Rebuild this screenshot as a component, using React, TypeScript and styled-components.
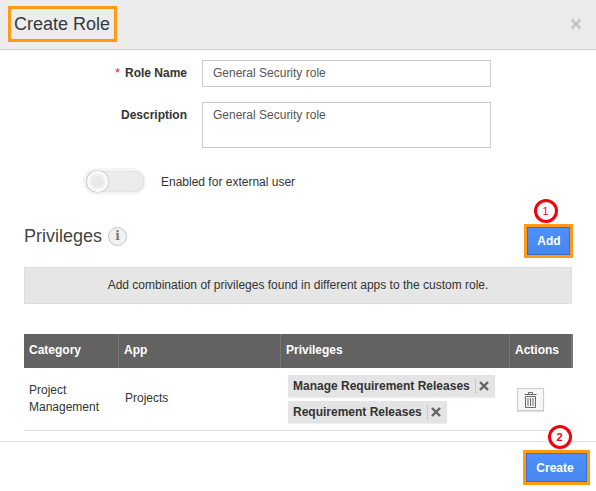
import React from 'react'
import styled, { createGlobalStyle } from 'styled-components'

const GlobalStyle = createGlobalStyle`
  html, body {
    margin: 0;
    padding: 0;
    background: #fff;
    font-family: "Liberation Sans", Arial, sans-serif;
    color: #333;
  }
`

const Modal = styled.div`
  width: 596px;
  height: 491px;
  overflow: hidden;
  background: #fff;
`

const Header = styled.header`
  height: 49px;
  box-sizing: content-box;
  background: #ececec;
  border-bottom: 1px solid #ccc;
  display: flex;
  align-items: center;
  justify-content: space-between;
  padding: 0 14px 0 8px;
`

const Highlight = styled.div`
  border: 3px solid #ff9a14;
  box-sizing: border-box;
  display: inline-flex;
`

const Title = styled(Highlight).attrs({ as: 'h1' })`
  margin: -1px 0 0;
  width: 109px;
  height: 36px;
  align-items: center;
  padding-left: 3px;
  font-size: 18px;
  font-weight: 400;
  color: #333a40;
  white-space: nowrap;
`

const CloseIcon = styled.svg`
  width: 12px;
  height: 12px;
  margin-top: -2px;
  stroke: #c4c4c4;
  stroke-width: 2.6;
`

const Form = styled.div`
  display: flex;
  flex-direction: column;
  padding-top: 10px;
`

const Field = styled.div<{ $mb: number }>`
  display: flex;
  margin-bottom: ${({ $mb }) => $mb}px;
`

const Label = styled.label`
  width: 187px;
  margin-right: 15px;
  padding-top: 6px;
  text-align: right;
  font-size: 12px;
  font-weight: 700;
  line-height: 15px;
  color: #333;
`

const Required = styled.span`
  color: #e8112d;
  font-weight: 400;
  margin-right: 5px;
`

const Input = styled.div<{ $h: number }>`
  width: 289px;
  height: ${({ $h }) => $h}px;
  box-sizing: border-box;
  border: 1px solid #ccc;
  padding: 5px 10px;
  font-size: 12px;
  line-height: 15px;
  color: #555;
`

const ToggleRow = styled.div`
  display: flex;
  align-items: center;
  margin-top: 20px;
  padding-left: 83px;
  height: 27px;
`

const Toggle = styled.div`
  width: 63px;
  height: 27px;
  box-sizing: border-box;
  border-radius: 14px;
  background: #f5f5f5;
  padding: 3px 3px;
  margin-right: 15px;
`

const ToggleTrack = styled.div`
  width: 57px;
  height: 21px;
  border-radius: 11px;
  background: #ececec;
  box-shadow: inset 0 0 1px #aaa;
  display: flex;
  align-items: center;
  padding-left: 1px;
`

const Knob = styled.div`
  width: 21px;
  height: 21px;
  border-radius: 50%;
  background: radial-gradient(circle, #e9e9e9 35%, #fff 68%);
  box-shadow: 0 0 2px #999;
`

const ToggleLabel = styled.span`
  font-size: 12px;
  color: #333;
`

const PrivilegesBar = styled.div`
  display: flex;
  align-items: center;
  justify-content: space-between;
  height: 34px;
  margin-top: 29px;
  padding: 0 23px 0 24px;
`

const Heading = styled.div`
  display: flex;
  align-items: center;
  gap: 6px;
  margin-top: -10px;
  font-size: 18px;
  color: #444;
`

const InfoIcon = styled.span`
  width: 17px;
  height: 17px;
  border-radius: 50%;
  border: 1px solid #c4c4c4;
  background: #f1f1f1;
  display: inline-flex;
  align-items: center;
  justify-content: center;
  font-size: 12px;
  font-family: "DejaVu Serif", serif;
  font-weight: 700;
  color: #777;
`

const ButtonFrame = styled(Highlight)`
  position: relative;
`

const PrimaryButton = styled.button<{ $w: number; $h: number; $pad: string }>`
  width: ${({ $w }) => $w}px;
  height: ${({ $h }) => $h}px;
  border: 1px solid #3a70c8;
  padding: ${({ $pad }) => $pad};
  background: linear-gradient(#4d90fe, #4787ed);
  color: #fff;
  font-family: inherit;
  font-size: 12px;
  font-weight: 700;
`

const Badge = styled.span<{ $bold?: boolean; $shift: number }>`
  position: absolute;
  top: -28px;
  left: 50%;
  margin-left: ${({ $shift }) => $shift}px;
  width: 24px;
  height: 24px;
  box-sizing: border-box;
  border: 3px solid #f5000f;
  border-radius: 50%;
  display: flex;
  align-items: center;
  justify-content: center;
  background: #fff;
  color: #f5000f;
  font-size: 11px;
  font-weight: ${({ $bold }) => ($bold ? 700 : 400)};
`

const Banner = styled.div`
  box-sizing: border-box;
  height: 37px;
  margin: 9px 24px 0;
  background: #e6e6e6;
  border: 1px solid #ddd;
  display: flex;
  align-items: center;
  justify-content: center;
  padding-bottom: 1px;
  font-size: 12px;
  color: #333;
`

const Table = styled.div`
  margin: 30px 24px 0;
  width: 549px;
  border-bottom: 1px solid #ddd;
`

const columns = '95px 162px 229px 63px'

const HeadRow = styled.div`
  display: grid;
  grid-template-columns: ${columns};
  height: 34px;
  background: #626262;
`

const HeadCell = styled.div`
  display: flex;
  align-items: center;
  padding: 0 0 2px 5px;
  border-right: 1px solid #777;
  font-size: 12px;
  font-weight: 700;
  color: #fff;
  &:last-child {
    border-right: 2px solid #777;
  }
`

const BodyRow = styled.div`
  display: grid;
  grid-template-columns: ${columns};
  height: 62px;
`

const Cell = styled.div`
  display: flex;
  align-items: center;
  padding-left: 5px;
  font-size: 12px;
  line-height: 17px;
  color: #333;
`

const AppCell = styled(Cell)`
  padding: 0 0 2px 6px;
`

const ChipCell = styled.div`
  display: flex;
  flex-direction: column;
  align-items: flex-start;
  gap: 4px;
  padding: 7px 0 0 7px;
`

const Chip = styled.div`
  display: flex;
  align-items: center;
  height: 22px;
  background: #e4e4e4;
  box-shadow: 0 1px 1px #eee;
  padding: 0 6px 0 5px;
  font-size: 12px;
  font-weight: 700;
  color: #333;
`

const ChipRemove = styled.span`
  display: flex;
  align-items: center;
  height: 15px;
  margin-left: 5px;
  padding-left: 3px;
  border-left: 1px solid #c8c8c8;
`

const ChipCross = styled.svg`
  width: 10px;
  height: 10px;
  stroke: #666;
  stroke-width: 2.4;
`

const ActionCell = styled(Cell)`
  padding-left: 7px;
`

const TrashButton = styled.div`
  width: 27px;
  height: 23px;
  box-sizing: border-box;
  border: 1px solid #ccc;
  background: #f6f6f6;
  box-shadow: 0 1px 1px #ddd;
  display: flex;
  align-items: center;
  justify-content: center;
  margin-top: 1px;
`

const TrashIcon = styled.svg`
  width: 13px;
  height: 16px;
  fill: none;
  stroke: #666;
  stroke-width: 1;
`

const Footer = styled.footer`
  margin-top: 10px;
  border-top: 1px solid #e3e3e3;
  display: flex;
  justify-content: flex-end;
  padding: 8px 6px 0 0;
`

function Cross() {
  return (
    <ChipCross viewBox="0 0 10 10">
      <path d="M1 1 L9 9 M9 1 L1 9" />
    </ChipCross>
  )
}

export default function App() {
  return (
    <Modal>
      <GlobalStyle />
      <Header>
        <Title>Create Role</Title>
        <CloseIcon viewBox="0 0 12 12">
          <path d="M1.5 1.5 L10.5 10.5 M10.5 1.5 L1.5 10.5" />
        </CloseIcon>
      </Header>

      <Form>
        <Field $mb={15}>
          <Label>
            <Required>*</Required>Role Name
          </Label>
          <Input $h={27}>General Security role</Input>
        </Field>
        <Field $mb={0}>
          <Label>Description</Label>
          <Input $h={46}>General Security role</Input>
        </Field>
        <ToggleRow>
          <Toggle>
            <ToggleTrack>
              <Knob />
            </ToggleTrack>
          </Toggle>
          <ToggleLabel>Enabled for external user</ToggleLabel>
        </ToggleRow>
      </Form>

      <PrivilegesBar>
        <Heading>
          Privileges <InfoIcon>i</InfoIcon>
        </Heading>
        <ButtonFrame>
          <Badge $shift={-15}>1</Badge>
          <PrimaryButton $w={43} $h={28} $pad="0 0 0 1px">Add</PrimaryButton>
        </ButtonFrame>
      </PrivilegesBar>

      <Banner>Add combination of privileges found in different apps to the custom role.</Banner>

      <Table>
        <HeadRow>
          <HeadCell>Category</HeadCell>
          <HeadCell>App</HeadCell>
          <HeadCell>Privileges</HeadCell>
          <HeadCell>Actions</HeadCell>
        </HeadRow>
        <BodyRow>
          <Cell>
            Project
            <br />
            Management
          </Cell>
          <AppCell>Projects</AppCell>
          <ChipCell>
            <Chip>
              Manage Requirement Releases
              <ChipRemove>
                <Cross />
              </ChipRemove>
            </Chip>
            <Chip>
              Requirement Releases
              <ChipRemove>
                <Cross />
              </ChipRemove>
            </Chip>
          </ChipCell>
          <ActionCell>
            <TrashButton>
              <TrashIcon viewBox="0 0 13 16">
                <path d="M0.5 2.5 H12.5 M4.5 2 V0.5 H8.5 V2 M1.5 4.5 H11.5 V15.5 H1.5 Z M4 6 V14 M6.5 6 V14 M9 6 V14" />
              </TrashIcon>
            </TrashButton>
          </ActionCell>
        </BodyRow>
      </Table>

      <Footer>
        <ButtonFrame>
          <Badge $bold $shift={-9}>2</Badge>
          <PrimaryButton $w={61} $h={29} $pad="0 3px 0 0">Create</PrimaryButton>
        </ButtonFrame>
      </Footer>
    </Modal>
  )
}
